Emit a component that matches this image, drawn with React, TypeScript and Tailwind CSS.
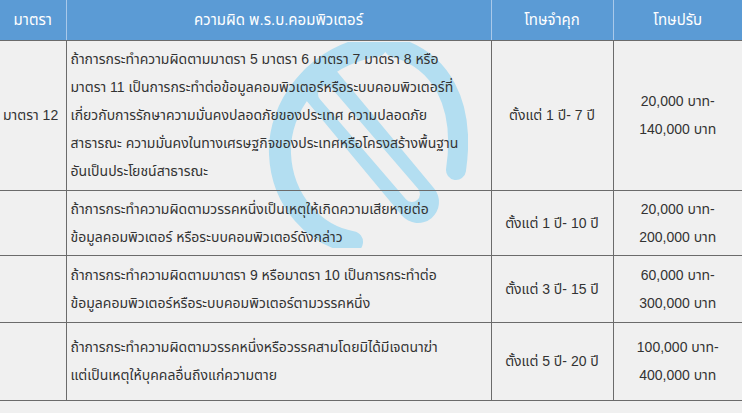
import React from 'react'

const font = { fontFamily: '"Liberation Sans", "Noto Sans Thai", "Noto Sans", Tahoma, sans-serif' }

const rows = [
  {
    h: 'h-[150px]',
    section: 'มาตรา 12',
    offence: [
      'ถ้าการกระทำความผิดตามมาตรา 5 มาตรา 6 มาตรา 7 มาตรา 8 หรือ',
      'มาตรา 11 เป็นการกระทำต่อข้อมูลคอมพิวเตอร์หรือระบบคอมพิวเตอร์ที่',
      'เกี่ยวกับการรักษาความมั่นคงปลอดภัยของประเทศ ความปลอดภัย',
      'สาธารณะ ความมั่นคงในทางเศรษฐกิจของประเทศหรือโครงสร้างพื้นฐาน',
      'อันเป็นประโยชน์สาธารณะ',
    ],
    jail: 'ตั้งแต่ 1 ปี- 7 ปี',
    fine: ['20,000 บาท-', '140,000 บาท'],
  },
  {
    h: 'h-[65px]',
    section: '',
    offence: [
      'ถ้าการกระทำความผิดตามวรรคหนึ่งเป็นเหตุให้เกิดความเสียหายต่อ',
      'ข้อมูลคอมพิวเตอร์ หรือระบบคอมพิวเตอร์ดังกล่าว',
    ],
    jail: 'ตั้งแต่ 1 ปี- 10 ปี',
    fine: ['20,000 บาท-', '200,000 บาท'],
  },
  {
    h: 'h-[67px]',
    section: '',
    offence: [
      'ถ้าการกระทำความผิดตามมาตรา 9 หรือมาตรา 10 เป็นการกระทำต่อ',
      'ข้อมูลคอมพิวเตอร์หรือระบบคอมพิวเตอร์ตามวรรคหนึ่ง',
    ],
    jail: 'ตั้งแต่ 3 ปี- 15 ปี',
    fine: ['60,000 บาท-', '300,000 บาท'],
  },
  {
    h: 'h-[78px]',
    section: '',
    offence: [
      'ถ้าการกระทำความผิดตามวรรคหนึ่งหรือวรรคสามโดยมิได้มีเจตนาฆ่า',
      'แต่เป็นเหตุให้บุคคลอื่นถึงแก่ความตาย',
    ],
    jail: 'ตั้งแต่ 5 ปี- 20 ปี',
    fine: ['100,000 บาท-', '400,000 บาท'],
  },
]

// faint logo watermark sitting behind the table text
function Watermark() {
  return (
    <svg
      className="pointer-events-none absolute left-[268px] top-[42px]"
      width="200"
      height="206"
      viewBox="0 0 200 206"
    >
      <g fill="none" stroke="#b3def1" strokeLinecap="round">
        <path d="M108 4 C46 14 10 66 12 112 C14 160 48 194 84 200" strokeWidth="22" />
        <path d="M126 5 C172 18 198 60 188 128" strokeWidth="20" />
        <path d="M52 42 L150 160" strokeWidth="42" />
      </g>
      <path d="M58 52 L144 152" stroke="#f0f0f0" strokeWidth="16" strokeLinecap="round" />
    </svg>
  )
}

export default function App() {
  return (
    <div className="relative h-[413px] w-[742px] overflow-hidden bg-[#f0f0f0] text-[#333333]" style={font}>
      <Watermark />
      <table className="relative w-[742px] table-fixed border-collapse">
        <colgroup>
          <col className="w-[66px]" />
          <col className="w-[425px]" />
          <col className="w-[122px]" />
          <col className="w-[129px]" />
        </colgroup>
        <thead>
          <tr className="h-[40px] bg-[#5b9bd5] text-[15px] text-white">
            <th className="border-r border-b border-r-[#a9c9ea] border-b-[#6b6b6b] font-normal">มาตรา</th>
            <th className="border-r border-b border-r-[#a9c9ea] border-b-[#6b6b6b] font-normal">ความผิด พ.ร.บ.คอมพิวเตอร์</th>
            <th className="border-r border-b border-r-[#a9c9ea] border-b-[#6b6b6b] font-normal">โทษจำคุก</th>
            <th className="border-b border-b-[#6b6b6b] font-normal">โทษปรับ</th>
          </tr>
        </thead>
        <tbody className="text-[14px] leading-[28px]">
          {rows.map((r, i) => (
            <tr key={i} className={r.h}>
              <td className="border-r border-b border-[#6b6b6b] pl-[3px] whitespace-nowrap">{r.section}</td>
              <td className="border-r border-b border-[#6b6b6b] px-[4px]">
                {r.offence.map((line) => (
                  <div key={line} className="whitespace-nowrap">
                    {line}
                  </div>
                ))}
              </td>
              <td className="border-r border-b border-[#6b6b6b] text-center whitespace-nowrap">{r.jail}</td>
              <td className="border-b border-[#6b6b6b] text-center">
                {r.fine.map((line) => (
                  <div key={line} className="whitespace-nowrap">
                    {line}
                  </div>
                ))}
              </td>
            </tr>
          ))}
        </tbody>
      </table>
    </div>
  )
}
